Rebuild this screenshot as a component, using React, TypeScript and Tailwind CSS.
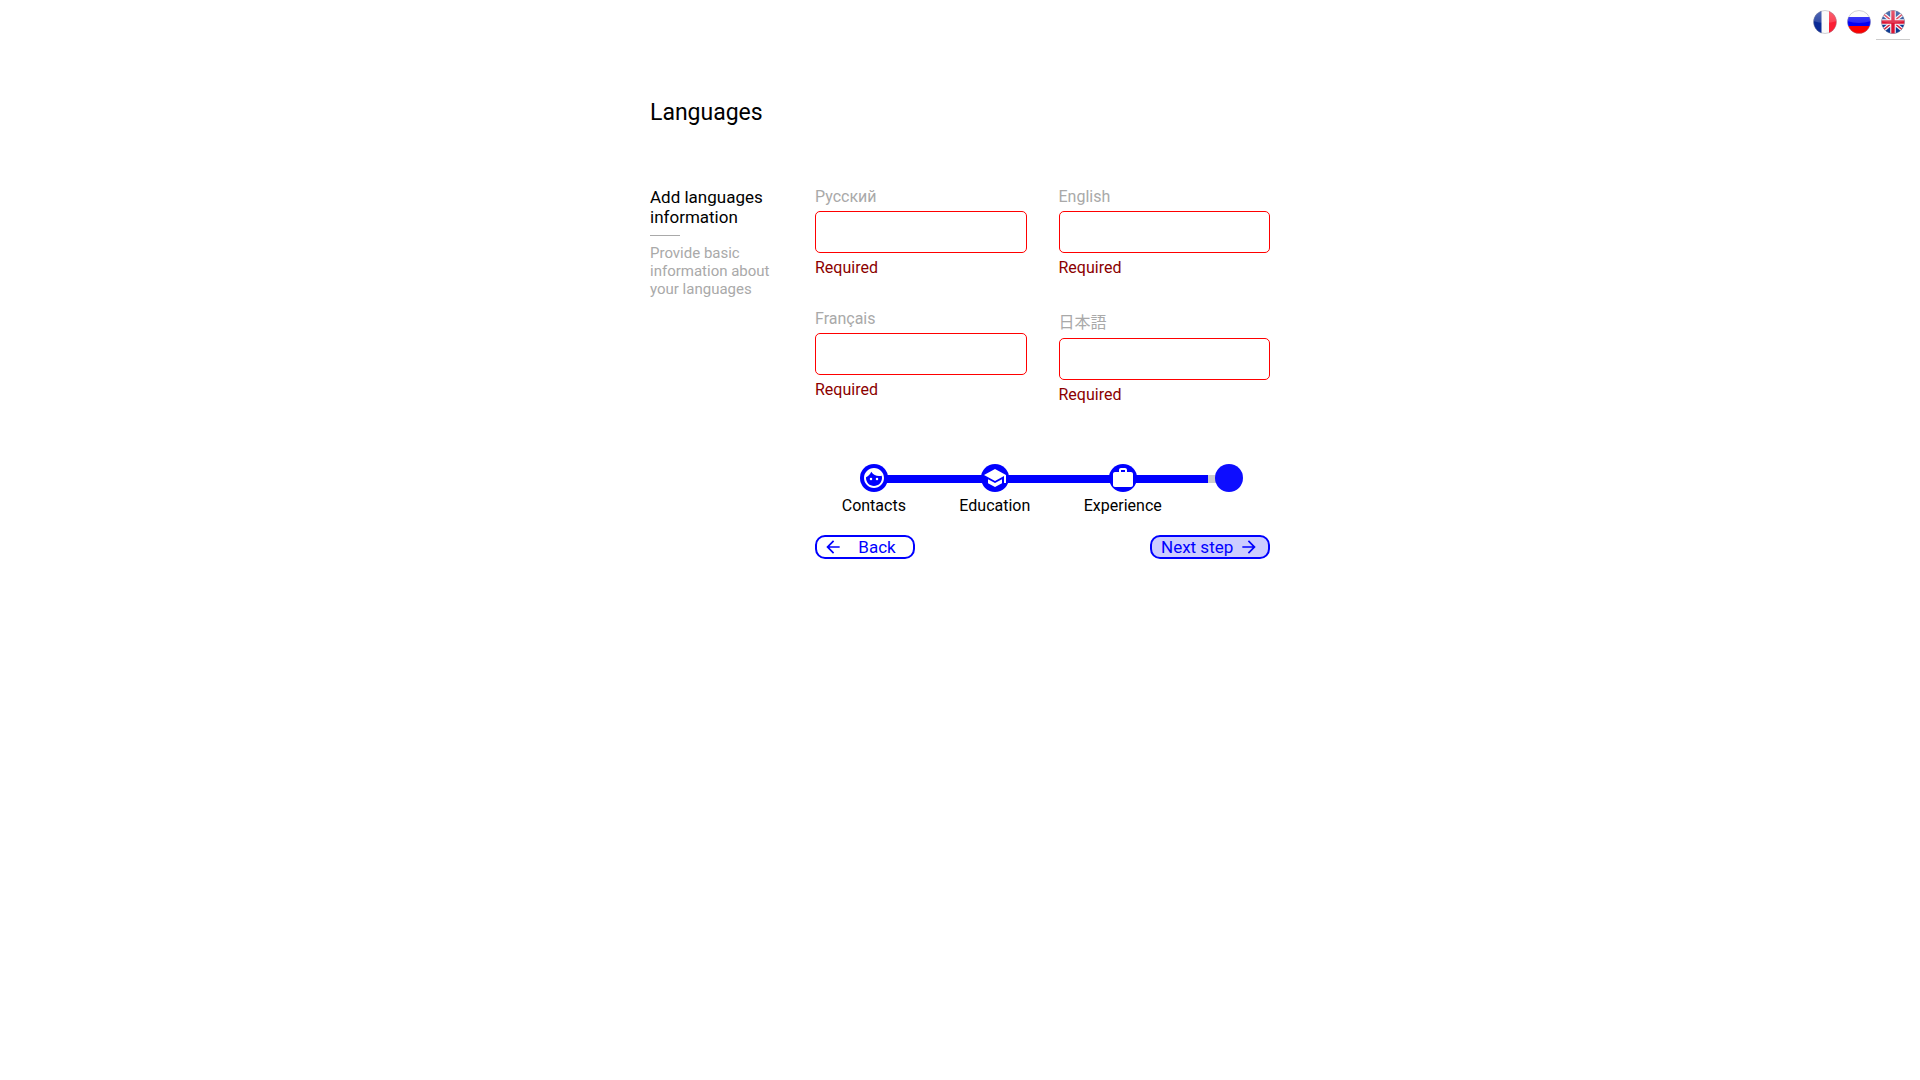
import { useId, type ReactNode } from "react";
import { MdArrowBack, MdArrowForward, MdFace, MdSchool, MdWork } from "react-icons/md";

type FlagCode = "fr" | "ru" | "gb";

function Flag({ code }: { code: FlagCode }) {
  const id = useId();
  return (
    <svg viewBox="0 0 24 24" className="size-6" aria-hidden="true">
      <defs>
        <clipPath id={`${id}c`}>
          <circle cx="12" cy="12" r="11.5" />
        </clipPath>
        <linearGradient id={`${id}g`} x1="0" y1="0" x2="0" y2="1">
          <stop offset="0" stopColor="#fff" stopOpacity="0.3" />
          <stop offset="1" stopColor="#fff" stopOpacity="0.15" />
        </linearGradient>
      </defs>
      <g clipPath={`url(#${id}c)`}>
        {code === "fr" && (
          <>
            <rect width="24" height="24" fill="#fafafa" />
            <rect width="8.5" height="24" fill="#0a2a96" />
            <rect x="16" width="8" height="24" fill="#fb1f35" />
          </>
        )}
        {code === "ru" && (
          <>
            <rect width="24" height="24" fill="#fafafa" />
            <rect y="7" width="24" height="9" fill="#0000f5" />
            <rect y="16" width="24" height="8" fill="#fa0000" />
          </>
        )}
        {code === "gb" && (
          <>
            <rect width="24" height="24" fill="#0c3a92" />
            <path d="M0 2 24 22M24 2 0 22" stroke="#f4f4f8" strokeWidth="3.8" />
            <path d="M0 2 24 22M24 2 0 22" stroke="#d8233f" strokeWidth="1.4" />
            <path d="M12 0V24M0 12H24" stroke="#f4f4f8" strokeWidth="5.6" />
            <path d="M12 0V24M0 12H24" stroke="#dc1433" strokeWidth="3.4" />
          </>
        )}
        <path d="M0 0H24V11Q12 15 0 11Z" fill={`url(#${id}g)`} />
      </g>
      <circle cx="12" cy="12" r="11.5" fill="none" stroke="#8f8f9c" strokeOpacity="0.5" strokeWidth="0.8" />
    </svg>
  );
}

const flags: { code: FlagCode; name: string }[] = [
  { code: "fr", name: "Français" },
  { code: "ru", name: "Русский" },
  { code: "gb", name: "English" },
];

function Field({ label, lang }: { label: string; lang: string }) {
  const id = `language-${lang}`;
  return (
    <div className="flex flex-col">
      <label htmlFor={id} lang={lang} className={lang === "ja" ? "pt-1 leading-5 text-[#a9a9a9]" : "text-[#a9a9a9]"}>
        {label}
      </label>
      <input
        id={id}
        type="text"
        aria-invalid="true"
        aria-describedby={`${id}-error`}
        className="my-[5px] h-[42px] w-full rounded-[5px] border border-[#ff0000] bg-white px-2 outline-none"
      />
      <p id={`${id}-error`} className="text-[#8b0000]">
        Required
      </p>
    </div>
  );
}

function Step({ label, children }: { label?: string; children?: ReactNode }) {
  return (
    <li className="relative flex flex-col items-center gap-1">
      <span
        className={
          label
            ? "flex size-7 items-center justify-center rounded-full bg-[#0000ff] text-white"
            : "flex size-7 rounded-full bg-[#0d0dff]"
        }
      >
        {children}
      </span>
      {label}
    </li>
  );
}

export default function App() {
  return (
    <div className="min-h-screen bg-white font-['Roboto','Noto_Sans_CJK_JP',sans-serif] text-base leading-[19px] text-black">
      <nav aria-label="Interface language" className="flex h-10 justify-end pr-2.5">
        {flags.map((f) => (
          <button
            key={f.code}
            type="button"
            aria-label={f.name}
            className={
              f.code === "gb"
                ? "border-b border-[#cccccc] px-[5px] pt-1 pb-0"
                : "border-b border-transparent px-[5px] pt-1 pb-0"
            }
          >
            <Flag code={f.code} />
          </button>
        ))}
      </nav>

      <main className="mx-auto max-w-[620px] pt-[59px]">
        <h1 className="text-[23px] leading-7">Languages</h1>

        <div className="mt-[60px] flex">
          <aside className="w-[165px] shrink-0 pr-10">
            <h2 className="text-[17px] leading-5">Add languages information</h2>
            <div className="my-2 h-px w-[30px] bg-[#a9a9a9]" />
            <p className="text-[15px] leading-[18px] text-[#a9a9a9]">Provide basic information about your languages</p>
          </aside>

          <form className="min-w-0 flex-1" onSubmit={(e) => e.preventDefault()}>
            <div className="grid grid-cols-2 gap-8">
              <Field label="Русский" lang="ru" />
              <Field label="English" lang="en" />
              <Field label="Français" lang="fr" />
              <Field label="日本語" lang="ja" />
            </div>

            <div className="relative mt-[60px]">
              <div className="absolute top-[11px] right-[41px] left-[59px] flex h-2 bg-[#cccccc]">
                <div className="mr-[21px] flex-1 bg-[#0000ff]" />
              </div>
              <ol className="flex justify-around">
                <Step label="Contacts">
                  <MdFace size={24} />
                </Step>
                <Step label="Education">
                  <MdSchool size={24} />
                </Step>
                <Step label="Experience">
                  <MdWork size={24} />
                </Step>
                <Step />
              </ol>
            </div>

            <div className="mt-5 flex justify-between">
              <button
                type="button"
                className="flex h-6 w-[100px] items-center rounded-[10px] border-2 border-[#0000ff] px-1.5 text-[17px] leading-5 text-[#0000ff]"
              >
                <MdArrowBack size={20} />
                <span className="flex-1 pl-1 text-center">Back</span>
              </button>
              <button
                type="submit"
                className="flex h-6 w-[120px] items-center justify-between rounded-[10px] border-2 border-[#0000ff] bg-[#ccccff] px-[9px] text-[17px] leading-5 text-[#0000ff]"
              >
                <span>Next step</span>
                <MdArrowForward size={20} />
              </button>
            </div>
          </form>
        </div>
      </main>
    </div>
  );
}
